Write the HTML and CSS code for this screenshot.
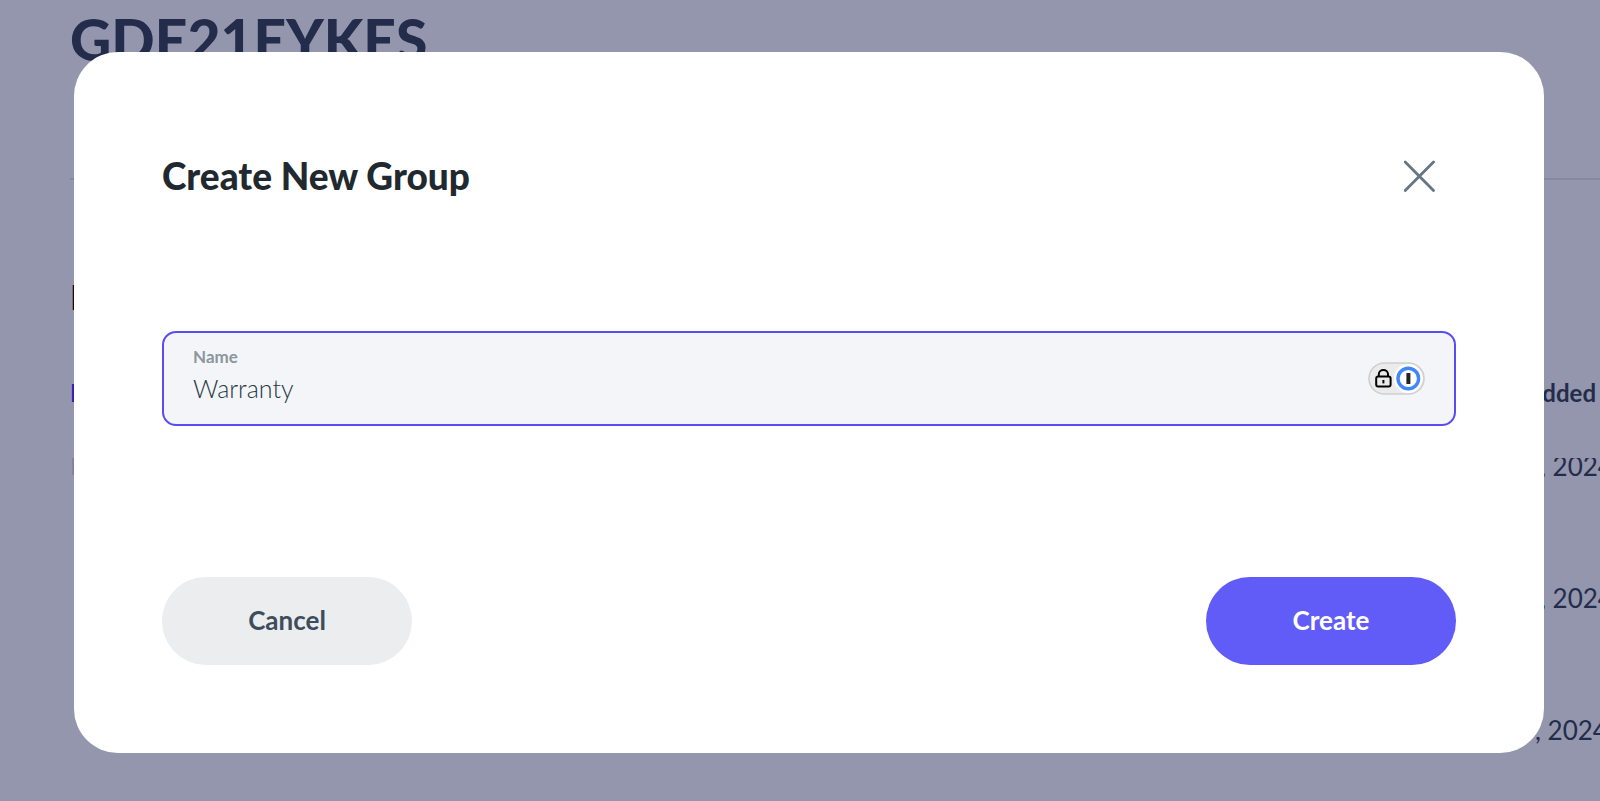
FILE: index.html
```html
<!DOCTYPE html>
<html lang="en">
<head>
<meta charset="utf-8">
<title>Create New Group</title>
<link rel="stylesheet" href="styles.css">
</head>
<body>
<main class="page">
  <h1 class="page-title">GDE21EYKES</h1>
  <h2 class="section-title">I</h2>
  <table class="list">
    <thead>
      <tr><th class="list-link">I</th><th class="list-date list-added">Added</th></tr>
    </thead>
    <tbody>
      <tr><td class="list-faint">I</td><td class="list-date"><span class="tucked">, 2024</span></td></tr>
      <tr><td></td><td class="list-date">, 2024</td></tr>
      <tr><td></td><td class="list-date list-date-wide">, 2024</td></tr>
    </tbody>
  </table>
</main>
<div class="overlay">
  <form class="modal" role="dialog" aria-labelledby="modal-title">
    <header class="modal-header">
      <h2 class="modal-title" id="modal-title">Create New Group</h2>
      <button class="close" type="button" aria-label="Close">
        <svg width="32" height="32" viewBox="0 0 32 32" fill="none" stroke="#667682" stroke-width="2.8" stroke-linecap="round"><path d="M1.2 2 29.5 30.5M29.5 2 1.2 30.5"/></svg>
      </button>
    </header>
    <div class="field">
      <div class="field-text">
        <label class="field-label" for="name">Name</label>
        <input class="field-input" id="name" type="text" value="Warranty">
      </div>
      <button class="vault" type="button" aria-label="Fill from password manager">
        <svg width="57" height="33" viewBox="0 0 57 33">
          <rect x="1" y="1" width="55" height="31" rx="15.5" fill="#ebebeb" stroke="#cfcfcf" stroke-width="1.6"/>
          <circle cx="40.3" cy="16.5" r="14.4" fill="#fff"/>
          <circle cx="40.3" cy="16.5" r="10.3" fill="#fff" stroke="#3f87fb" stroke-width="3.4"/>
          <rect x="38.4" y="11" width="4" height="11" rx=".6" fill="#222"/>
          <rect x="8.2" y="14.6" width="14.4" height="10" rx="2" fill="none" stroke="#000" stroke-width="2"/>
          <path d="M10.8 14.4v-2.2a4.6 4.2 0 0 1 9.2 0v2.2" fill="none" stroke="#000" stroke-width="2"/>
          <path d="M15.4 18v3.4" stroke="#000" stroke-width="2"/>
        </svg>
      </button>
    </div>
    <footer class="modal-footer">
      <button class="btn btn-cancel" type="button">Cancel</button>
      <button class="btn btn-create" type="submit">Create</button>
    </footer>
  </form>
</div>
</body>
</html>
```
FILE: styles.css
```css
* { box-sizing: border-box; }
body {
  margin: 0;
  height: 100vh;
  overflow: hidden;
  background: #9496ad;
  color: #232c4b;
  font-family: Lato, "Open Sans", sans-serif;
  font-size: 24px;
  line-height: 32px;
}
h1, h2 { margin: 0; }
.page {
  height: 100%;
  padding-left: 70px;
  overflow: hidden;
}
.page-title {
  padding-bottom: 100px;
  border-bottom: 2px solid #8688a1;
  font-size: 57px;
  font-weight: 900;
  line-height: 78px;
}
.section-title {
  padding: 97px 0 60px;
  color: #060a2a;
  font-size: 34px;
  line-height: 40px;
}
.list {
  width: 100%;
  border-collapse: collapse;
  table-layout: fixed;
  text-align: left;
}
.list th, .list td {
  height: 132px;
  padding: 0;
  vertical-align: top;
}
.list th { height: 73px; }
.list .list-link { color: #2b1fb5; }
.list .list-faint { color: #7f829b; }
.list .list-date {
  width: 60px;
  white-space: nowrap;
}
.list td.list-date { font-size: 26px; }
.list .list-added { padding-right: 4px; direction: rtl; }
.list .list-date-wide { text-indent: -5px; }
.tucked {
  display: inline-block;
  clip-path: inset(8px 0 0);
}
.overlay {
  position: fixed;
  inset: 0;
  display: flex;
  align-items: center;
  padding: 4px 56px 0 74px;
}
.modal {
  width: 100%;
  padding: 88px;
  border-radius: 44px;
  background: #fff;
}
.modal-header, .modal-footer {
  display: flex;
  align-items: center;
  justify-content: space-between;
}
.modal-title {
  color: #1f292f;
  font-size: 37px;
  font-weight: 900;
  line-height: 44px;
}
.close {
  display: grid;
  place-items: center;
  width: 72px;
  height: 72px;
  padding: 0;
  border: 0;
  background: none;
}
.field {
  display: flex;
  align-items: center;
  margin: 119px 0 151px;
  padding: 12px 29px 18px;
  border: 2px solid #5a4cf3;
  border-radius: 14px;
  background: #f4f5f8;
}
.field-text { flex: 1; display: flex; flex-direction: column; }
.field-label {
  color: #8b969e;
  font-size: 17px;
  font-weight: 700;
  line-height: 24px;
}
.field-input {
  width: 100%;
  height: 37px;
  padding: 0;
  border: 0;
  outline: 0;
  background: none;
  color: #263947;
  font: 300 25px/36px Lato, "Open Sans", sans-serif;
}
.vault { display: flex; padding: 6px 0 0; border: 0; background: none; }
.btn {
  width: 250px;
  height: 88px;
  padding: 0 0 2px;
  border: 0;
  border-radius: 44px;
  font: 700 26px/32px Lato, "Open Sans", sans-serif;
}
.btn-cancel { background: #ebedee; color: #3d4d5c; }
.btn-create { background: #615bf7; color: #fff; }
```
